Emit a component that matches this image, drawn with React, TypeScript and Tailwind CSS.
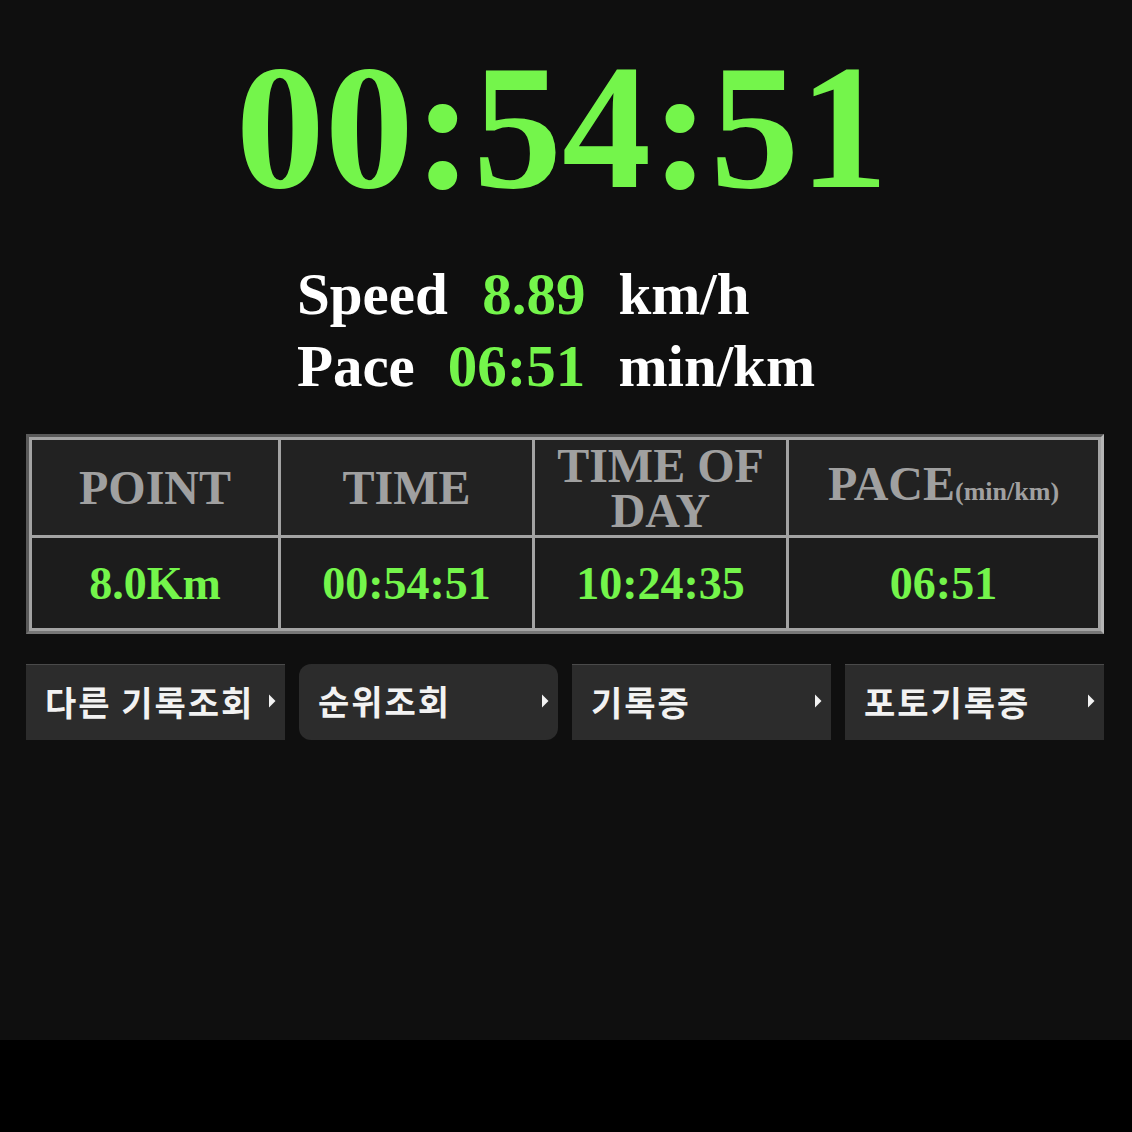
const serif = "font-['Liberation_Serif','Times_New_Roman',serif] font-bold";
const green = "text-[#74f54b]";

const headers = ["POINT", "TIME", "TIME OF DAY", "PACE"];
const values = ["8.0Km", "00:54:51", "10:24:35", "06:51"];
const buttons = [
  { label: "다른 기록조회", rounded: false },
  { label: "순위조회", rounded: true },
  { label: "기록증", rounded: false },
  { label: "포토기록증", rounded: false },
];

function Arrow() {
  return (
    <svg width="8" height="16" viewBox="0 0 8 16" className="shrink-0">
      <path d="M1 1.5 L7.5 8 L1 14.5 Z" fill="#f2f2f2" />
    </svg>
  );
}

export default function App() {
  return (
    <div className="min-h-screen bg-black">
      <div className="h-[1040px] bg-[#0f0f0f]">
        <div className="flex justify-center pr-[8px] pt-[38px]">
          <span className={`${serif} ${green} text-[178px] leading-none`}>00:54:51</span>
        </div>

        <div className="mt-[42px] flex justify-center pr-[20px]">
          <div className={`${serif} grid grid-cols-[auto_auto_auto] text-[59px] leading-[72px]`}>
            <span className="text-white">Speed</span>
            <span className={`${green} text-right`}>8.89</span>
            <span className="pl-[33px] text-white">km/h</span>
            <span className="text-white">Pace</span>
            <span className={`${green} text-right`}>06:51</span>
            <span className="pl-[33px] text-white">min/km</span>
          </div>
        </div>

        <div className="ml-[26px] mr-[28px] mt-[32px]">
          <div className="border-[3px] border-[#5a5a5a] border-b-[#777] border-r-[#b5b5b5]">
            <div className="grid grid-cols-[246px_251px_251px_1fr] gap-[3px] bg-[#a3a3a3] p-[3px]">
              {headers.map((h) => (
                <div
                  key={h}
                  className={`${serif} flex h-[95px] items-center justify-center bg-[#222222] text-center text-[48px] leading-[45px] text-[#a0a0a0]`}
                >
                  {h === "TIME OF DAY" ? (
                    <span>
                      TIME OF
                      <br />
                      DAY
                    </span>
                  ) : h === "PACE" ? (
                    <span>
                      PACE<span className="text-[26px]">(min/km)</span>
                    </span>
                  ) : (
                    h
                  )}
                </div>
              ))}
              {values.map((v) => (
                <div
                  key={v}
                  className={`${serif} ${green} flex h-[90px] items-center justify-center bg-[#1c1c1c] text-[46px]`}
                >
                  {v}
                </div>
              ))}
            </div>
          </div>
        </div>

        <div className="ml-[26px] mr-[28px] mt-[30px] grid grid-cols-4 gap-[14px]">
          {buttons.map((b) => (
            <div
              key={b.label}
              className={`flex h-[76px] items-center justify-between bg-[#2c2c2c] pb-[3px] pl-[19px] pr-[9px] ${
                b.rounded ? "rounded-[12px] bg-[#2a2a2a]" : "border-t border-[#4a4a4a]"
              }`}
            >
              <span className="whitespace-nowrap font-['Noto_Sans_CJK_KR','Noto_Sans',sans-serif] text-[34px] font-bold tracking-[2px] text-[#f2f2f2]">
                {b.label}
              </span>
              <Arrow />
            </div>
          ))}
        </div>
      </div>
    </div>
  );
}
